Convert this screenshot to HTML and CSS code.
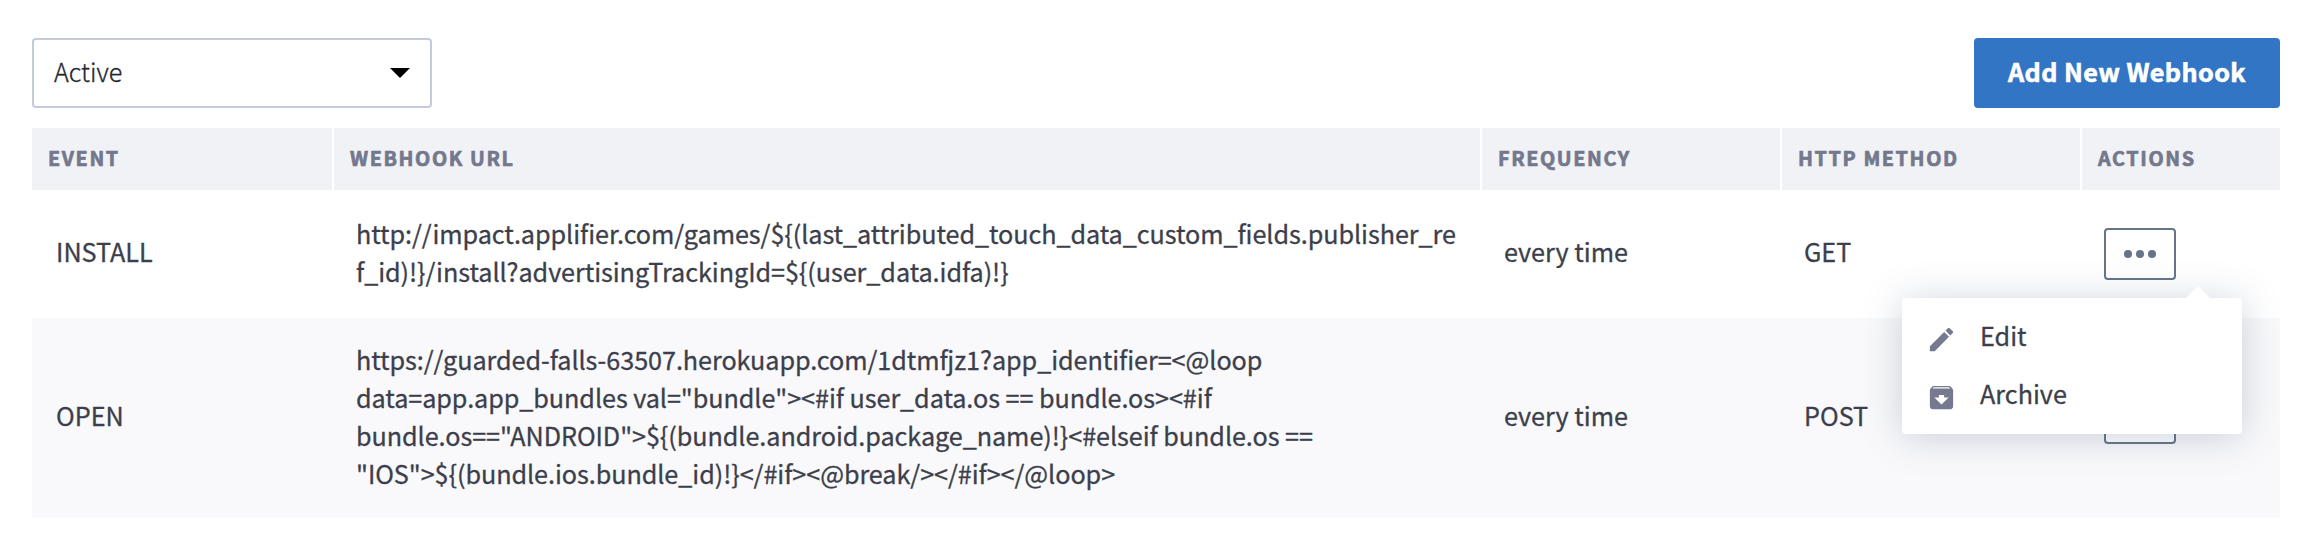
FILE: index.html
```html
<!DOCTYPE html>
<html lang="en">
<head>
<meta charset="utf-8">
<title>Webhooks</title>
<link rel="stylesheet" href="styles.css">
</head>
<body>
<main class="page">
  <div class="toolbar">
    <div class="select"><span class="txt select-label">Active</span><svg class="caret" viewBox="0 0 20 10"><path d="M0 0h20L10 10z"/></svg></div>
    <button class="add"><span class="txt">Add New Webhook</span></button>
  </div>
  <div class="row head">
    <div class="th"><span class="txt">EVENT</span></div>
    <div class="th"><span class="txt">WEBHOOK URL</span></div>
    <div class="th"><span class="txt">FREQUENCY</span></div>
    <div class="th"><span class="txt">HTTP METHOD</span></div>
    <div class="th"><span class="txt">ACTIONS</span></div>
  </div>
  <div class="row body">
    <div class="td first"><span class="txt">INSTALL</span></div>
    <div class="td"><span class="txt url">http://impact.applifier.com/games/${(last_attributed_touch_data_custom_fields.publisher_re<br>f_id)!}/install?advertisingTrackingId=${(user_data.idfa)!}</span></div>
    <div class="td"><span class="txt">every time</span></div>
    <div class="td"><span class="txt">GET</span></div>
    <div class="td">
      <div class="actions">
        <button class="more"><svg viewBox="0 0 32 8"><circle cx="4" cy="4" r="4"/><circle cx="16" cy="4" r="4"/><circle cx="28" cy="4" r="4"/></svg></button>
        <div class="menu">
          <svg class="arrow" viewBox="0 0 26 13"><path d="M0 13L13 0l13 13z"/></svg>
          <div class="item"><svg class="icon" viewBox="0 0 24 24"><path d="M3 17.25V21h3.75L17.81 9.94l-3.75-3.75L3 17.25zM20.71 7.04a1 1 0 0 0 0-1.41l-2.34-2.34a1 1 0 0 0-1.41 0l-1.83 1.83 3.75 3.75 1.83-1.83z"/></svg><span class="txt">Edit</span></div>
          <div class="item"><svg class="icon" viewBox="0 0 24 24"><path d="M20.54 5.23l-1.39-1.68C18.88 3.21 18.47 3 18 3H6c-.47 0-.88.21-1.16.55L3.46 5.23C3.17 5.57 3 6.02 3 6.5V19c0 1.1.9 2 2 2h14c1.1 0 2-.9 2-2V6.5c0-.48-.17-.93-.46-1.27zM12 17.5L6.5 12H10v-2h4v2h3.500L12 17.500zM5.120 5l.81-1h12l.94 1H5.120z"/></svg><span class="txt">Archive</span></div>
        </div>
      </div>
    </div>
  </div>
  <div class="row body alt">
    <div class="td first"><span class="txt">OPEN</span></div>
    <div class="td"><span class="txt url">https://guarded-falls-63507.herokuapp.com/1dtmfjz1?app_identifier=&lt;@loop<br>data=app.app_bundles val="bundle"&gt;&lt;#if user_data.os == bundle.os&gt;&lt;#if<br>bundle.os=="ANDROID"&gt;${(bundle.android.package_name)!}&lt;#elseif bundle.os ==<br>"IOS"&gt;${(bundle.ios.bundle_id)!}&lt;/#if&gt;&lt;@break/&gt;&lt;/#if&gt;&lt;/@loop&gt;</span></div>
    <div class="td"><span class="txt">every time</span></div>
    <div class="td"><span class="txt">POST</span></div>
    <div class="td"><button class="more"><svg viewBox="0 0 32 8"><circle cx="4" cy="4" r="4"/><circle cx="16" cy="4" r="4"/><circle cx="28" cy="4" r="4"/></svg></button></div>
  </div>
</main>
</body>
</html>
```
FILE: styles.css
```css
* { box-sizing: border-box; }
body {
  margin: 0;
  background: #fff;
  color: #3c3f4b;
  font: 400 25.2px/38px "Noto Sans CJK SC", "Noto Sans CJK JP", sans-serif;
}
button { font: inherit; margin: 0; padding: 0; cursor: pointer; }
svg { display: block; }
.page { padding: 38px 36px 0 32px; }
.txt {
  display: block;
  white-space: nowrap;
  padding-bottom: 4px;
  font-variant-ligatures: none;
}

.toolbar { display: flex; justify-content: space-between; height: 70px; margin-bottom: 20px; }
.select {
  width: 400px;
  display: flex;
  align-items: center;
  justify-content: space-between;
  border: 2px solid #c3ccd8;
  border-radius: 4px;
  padding: 0 20px;
}
.select-label { font-weight: 300; color: #24262e; -webkit-text-stroke: 0.3px; }
.caret { width: 20px; height: 10px; fill: #000; }
.add {
  width: 306px;
  border: 0;
  border-radius: 4px;
  background: #3275c4;
  color: #fff;
  font-weight: 700;
  letter-spacing: 0.4px;
  -webkit-text-stroke: 0.6px;
}

.row { display: grid; grid-template-columns: 300px 1146px 298px 298px 198px; column-gap: 2px; }
.th {
  height: 62px;
  padding-left: 16px;
  display: flex;
  align-items: center;
  background: #f1f2f6;
  color: #74788d;
  font-size: 19.8px;
  font-weight: 700;
  letter-spacing: 1.6px;
  -webkit-text-stroke: 0.7px;
}
.th .txt { padding-bottom: 3px; }
.body { min-height: 128px; padding: 22px 0; align-items: center; }
.alt { background: #f9f9fb; }
.td { padding-left: 22px; -webkit-text-stroke: 0.3px; }
.td.first { padding-left: 24px; }
.td > .txt { padding-bottom: 6px; }
.td > .url { padding-bottom: 4px; letter-spacing: -0.06px; }
.actions { position: relative; }
.more {
  display: flex;
  align-items: center;
  justify-content: center;
  width: 72px;
  height: 52px;
  border: 2px solid #66758a;
  border-radius: 4px;
  background: #fff;
}
.more svg { width: 32px; height: 8px; fill: #66758a; }

.menu {
  position: absolute;
  z-index: 2;
  top: 70px;
  left: -202px;
  width: 340px;
  height: 136px;
  padding: 10px 26px;
  background: #fff;
  border-radius: 4px;
  box-shadow: 0 3px 38px rgba(60, 85, 120, 0.26);
}
.arrow { position: absolute; top: -12px; left: 283px; width: 26px; height: 13px; fill: #fff; }
.item { display: flex; align-items: center; gap: 23px; height: 58px; }
.icon { width: 31px; height: 31px; margin: 4px 0 0 -2px; fill: #767a90; }
```
